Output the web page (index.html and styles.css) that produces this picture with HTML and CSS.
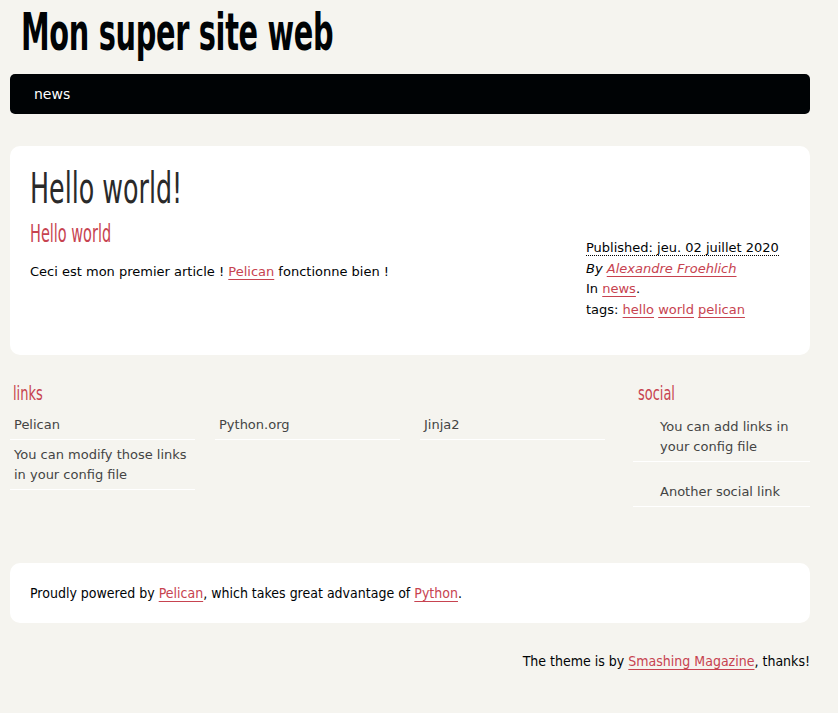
FILE: index.html
```html
<!DOCTYPE html>
<html lang="fr">
<head>
<meta charset="utf-8">
<title>Mon super site web</title>
<link rel="stylesheet" href="styles.css">
</head>
<body>
<header class="banner">
  <h1 class="site-title">Mon super site web</h1>
  <nav class="nav"><a class="nav-link" href="#">news</a></nav>
</header>

<section class="article-box">
  <h1 class="entry-title">Hello world!</h1>
  <div class="entry">
    <div class="entry-content">
      <h2 class="entry-sub">Hello world</h2>
      <p>Ceci est mon premier article ! <a href="#">Pelican</a> fonctionne bien !</p>
    </div>
    <footer class="post-info">
      <div><abbr class="published" title="2020-07-02">Published: jeu. 02 juillet 2020</abbr></div>
      <div class="vcard"><em>By <a href="#">Alexandre Froehlich</a></em></div>
      <div>In <a href="#">news</a>.</div>
      <div>tags: <a href="#">hello</a> <a href="#">world</a> <a href="#">pelican</a></div>
    </footer>
  </div>
</section>

<section class="extras">
  <div class="blogroll">
    <h2 class="extras-title">links</h2>
    <ul class="roll-list">
      <li><a href="#">Pelican</a></li>
      <li><a href="#">Python.org</a></li>
      <li><a href="#">Jinja2</a></li>
      <li><a href="#">You can modify those links in your config file</a></li>
    </ul>
  </div>
  <div class="social">
    <h2 class="extras-title social-title">social</h2>
    <ul class="social-list">
      <li><a href="#">You can add links in your config file</a></li>
      <li><a href="#">Another social link</a></li>
    </ul>
  </div>
</section>

<section class="about">
  <p>Proudly powered by <a href="#">Pelican</a>, which takes great advantage of <a href="#">Python</a>.</p>
</section>

<footer class="credits">
  <p>The theme is by <a href="#">Smashing Magazine</a>, thanks!</p>
</footer>
</body>
</html>
```

FILE: styles.css
```css
html, body { margin: 0; padding: 0; }
body {
  background: #F5F4EF;
  color: #000305;
  font-family: "DejaVu Sans", sans-serif;
  font-size: 13px;
  line-height: 1.5;
  width: 800px;
  padding: 0 10px;
}
a { color: #C74350; text-underline-offset: 3px; }
h1, h2 { margin: 0; font-weight: normal; }

.site-title, .entry-title, .entry-sub, .extras-title {
  font-family: "DejaVu Sans Condensed", "DejaVu Sans", sans-serif;
  font-stretch: condensed;
  transform-origin: left center;
}

.banner { padding-top: 4px; }
.site-title {
  font-size: 52px;
  line-height: 56px;
  margin-left: 11px;
  color: #000305;
  font-weight: bold;
  letter-spacing: -0.5px;
  transform: scaleX(0.615);
}
.nav {
  margin-top: 14px;
  height: 40px;
  background: #000305;
  border-radius: 5px;
  display: flex;
  align-items: center;
  padding-left: 24px;
}
.nav-link {
  color: #fff;
  text-decoration: none;
  font-size: 14px;
}

.article-box {
  margin-top: 32px;
  background: #fff;
  border-radius: 10px;
  padding: 18px 20px 35px 20px;
}
.entry-title {
  font-size: 43px;
  line-height: 48px;
  color: #2a2a2a;
  transform: scaleX(0.655);
}
.entry { display: flex; justify-content: space-between; }
.entry-sub {
  font-size: 24px;
  line-height: 28px;
  margin-top: 8px;
  color: #C74350;
  transform: scaleX(0.67);
}
.entry-content p { margin: 14px 0 0; }
.post-info {
  width: 204px;
  margin-top: 26px;
  line-height: 20.5px;
}
.published { text-decoration: none; border-bottom: 1px dotted #000; }

.extras {
  display: flex;
  justify-content: space-between;
  margin-top: 26px;
}
.blogroll { width: 600px; }
.social { width: 177px; }
.extras-title {
  font-size: 20px;
  line-height: 24px;
  color: #C74350;
  margin-left: 3px;
  transform: scaleX(0.72);
}
.social-title { margin-left: 5px; }
.roll-list, .social-list { list-style: none; margin: 0; padding: 0; }
.roll-list { display: grid; grid-template-columns: repeat(3, 185px); column-gap: 20px; margin-top: 5px; }
.roll-list li, .social-list li { border-bottom: 1px solid #fff; padding: 5px 4px 4px 4px; line-height: 20px; }
.roll-list a, .social-list a { color: #444; text-decoration: none; }
.social-list li { padding-left: 27px; }
.social-list li + li { margin-top: 15px; }
.social-list { margin-top: 7px; }

.about {
  margin-top: 56px;
  background: #fff;
  border-radius: 10px;
  padding: 19px 20px;
}
.about p, .credits p {
  margin: 0;
  font-family: "DejaVu Sans Condensed", "DejaVu Sans", sans-serif;
  font-stretch: condensed;
  font-size: 14px;
  line-height: 22px;
}
.credits { text-align: right; margin-top: 27px; }
```
